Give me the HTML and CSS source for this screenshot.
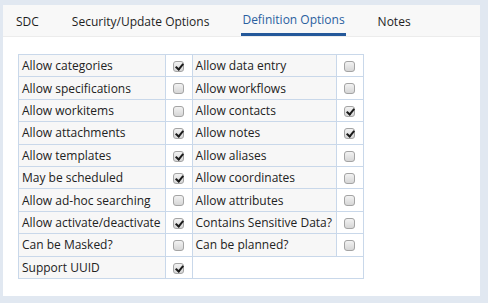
FILE: index.html
```html
<!DOCTYPE html>
<html lang="en">
<head>
    <meta charset="UTF-8">
    <title>Definition Options</title>
    <link rel="stylesheet" href="styles.css">
</head>
<body>
    <div class="panel">
        <div class="tabs">
            <span class="tab">SDC</span>
            <span class="tab">Security/Update Options</span>
            <span class="tab active">Definition Options</span>
            <span class="tab">Notes</span>
        </div>

        <table class="options">
            <tr>
                <td class="label">Allow categories</td><td class="box"><span class="check on"></span></td>
                <td class="label">Allow data entry</td><td class="box"><span class="check"></span></td>
            </tr>
            <tr>
                <td class="label">Allow specifications</td><td class="box"><span class="check"></span></td>
                <td class="label">Allow workflows</td><td class="box"><span class="check"></span></td>
            </tr>
            <tr>
                <td class="label">Allow workitems</td><td class="box"><span class="check"></span></td>
                <td class="label">Allow contacts</td><td class="box"><span class="check on"></span></td>
            </tr>
            <tr>
                <td class="label">Allow attachments</td><td class="box"><span class="check on"></span></td>
                <td class="label">Allow notes</td><td class="box"><span class="check on"></span></td>
            </tr>
            <tr>
                <td class="label">Allow templates</td><td class="box"><span class="check on"></span></td>
                <td class="label">Allow aliases</td><td class="box"><span class="check"></span></td>
            </tr>
            <tr>
                <td class="label">May be scheduled</td><td class="box"><span class="check on"></span></td>
                <td class="label">Allow coordinates</td><td class="box"><span class="check"></span></td>
            </tr>
            <tr>
                <td class="label">Allow ad-hoc searching</td><td class="box"><span class="check"></span></td>
                <td class="label">Allow attributes</td><td class="box"><span class="check"></span></td>
            </tr>
            <tr>
                <td class="label">Allow activate/deactivate</td><td class="box"><span class="check on"></span></td>
                <td class="label">Contains Sensitive Data?</td><td class="box"><span class="check"></span></td>
            </tr>
            <tr>
                <td class="label">Can be Masked?</td><td class="box"><span class="check"></span></td>
                <td class="label">Can be planned?</td><td class="box"><span class="check"></span></td>
            </tr>
            <tr>
                <td class="label">Support UUID</td><td class="box"><span class="check on"></span></td>
                <td class="empty" colspan="2"></td>
            </tr>
        </table>
    </div>
</body>
</html>
```

FILE: styles.css
```css
/* Base styles */
body {
    margin: 0;
    padding: 5px 8px 7px 3px;
    background: #e1e8f1;
    font-family: "Open Sans", sans-serif;
    color: #222;
}

.panel {
    background: white;
    height: 291px;
}

.tabs {
    display: flex;
    gap: 31px;
    height: 32px;
    padding-left: 12px;
    background: #f8f8f8;
    border-bottom: 1px solid #ececec;
    box-sizing: border-box;
}

.tab {
    font-size: 12px;
    line-height: 33px;
    padding: 0 1px;
    color: #1e1e1e;
    box-sizing: border-box;
}

.tab.active {
    color: #2a5f9f;
    border-bottom: 3px solid #24589a;
    line-height: 30px;
}

.options {
    border-collapse: collapse;
    margin: 17px 0 0 15px;
    font-size: 12px;
}

.options td {
    border: 1px solid #c9d8ea;
    height: 21.4px;
    padding: 0 4px 0 3px;
}

.options td.label {
    background: #f7f7f7;
    white-space: nowrap;
}

.options td.box {
    width: 27px;
    text-align: center;
    vertical-align: top;
    padding: 4px 0 0;
    box-sizing: border-box;
}

.options td.empty {
    background: white;
}

.check {
    display: inline-block;
    width: 11px;
    height: 11px;
    border: 1px solid #a4a4a4;
    border-radius: 3px;
    background: linear-gradient(#f2f2f2, #d6d6d6);
    box-sizing: border-box;
    position: relative;
}

.check.on::after {
    content: "";
    position: absolute;
    left: 3px;
    top: 0;
    width: 3px;
    height: 6px;
    border: solid #1a1a1a;
    border-width: 0 2px 2px 0;
    transform: rotate(40deg);
}
```
